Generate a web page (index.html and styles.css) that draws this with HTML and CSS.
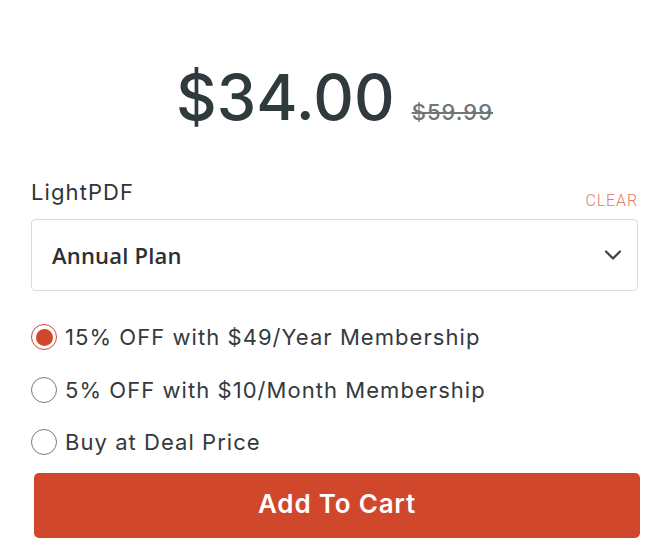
FILE: index.html
```html
<!DOCTYPE html>
<html>
<head>
<meta charset="utf-8">
<link rel="stylesheet" href="styles.css">
</head>
<body>
<div class="card">
  <div class="price-row">
    <span class="price">$34.00</span>
    <span class="old-price">$59.99</span>
  </div>
  <div class="label-row">
    <span class="label">LightPDF</span>
    <span class="clear">CLEAR</span>
  </div>
  <div class="select">
    <span class="select-text">Annual Plan</span>
    <svg class="chevron" width="18" height="12" viewBox="0 0 18 12"><path d="M2 2.5 L9 9.5 L16 2.5" fill="none" stroke="#3a4049" stroke-width="2.2" stroke-linecap="round" stroke-linejoin="round"/></svg>
  </div>
  <div class="options">
    <label class="option"><span class="radio checked"></span><span>15% OFF with $49/Year Membership</span></label>
    <label class="option"><span class="radio"></span><span>5% OFF with $10/Month Membership</span></label>
    <label class="option"><span class="radio"></span><span>Buy at Deal Price</span></label>
  </div>
  <button class="cart">Add To Cart</button>
</div>
</body>
</html>
```
FILE: styles.css
```css
* { box-sizing: border-box; }
html, body { margin: 0; padding: 0; background: #fff; }
body { font-family: Inter, "Open Sans", sans-serif; color: #333a3d; }
.card { width: 664px; padding: 0 26px 0 31px; }
.price-row {
  display: flex; justify-content: center; align-items: baseline;
  gap: 17px; padding-top: 66px; height: 160px; margin-left: 0;
}
.price { font-size: 63px; font-weight: 500; color: #2f3a3d; line-height: 1; letter-spacing: 0.1px; }
.old-price { font-size: 22px; font-weight: 500; color: #6e7677; text-decoration: line-through; line-height: 1; letter-spacing: 1px; }
.label-row { display: flex; justify-content: space-between; align-items: flex-end; height: 52px; padding-top: 18px; }
.label { font-size: 22px; color: #2f3538; line-height: 28px; align-self: flex-start; letter-spacing: 1.1px; }
.clear { font-size: 16px; font-weight: 300; color: #e07c60; font-family: Roboto, sans-serif; letter-spacing: 0.9px; margin-bottom: 2px; }
.select {
  margin-top: 7px; height: 72px; border: 1px solid #dcdcdc; border-radius: 4px;
  display: flex; align-items: center; justify-content: space-between; padding: 0 15px 0 20px;
}
.select-text { font-family: "Open Sans", sans-serif; font-size: 22px; font-weight: 600; color: #2c3034; letter-spacing: 0.2px; }
.options { padding-top: 20px; display: flex; flex-direction: column; gap: 0; }
.option { display: flex; align-items: center; gap: 8px; height: 52.5px; font-size: 22px; color: #333a3d; letter-spacing: 1.05px; }
.radio {
  width: 26px; height: 26px; border-radius: 50%; border: 1.5px solid #7a7a7a; flex: none;
  display: flex; align-items: center; justify-content: center;
}
.radio.checked { border-color: #d0472c; }
.radio.checked::after { content: ""; width: 17px; height: 17px; border-radius: 50%; background: #d0472c; }
.cart {
  display: block; margin: 4px 0 0 3px; width: 606px; height: 65px; border: none; border-radius: 5px;
  background: #d0472c; color: #fff; font-family: Inter, sans-serif; font-size: 26px; font-weight: 600;
  letter-spacing: 0.8px; padding-bottom: 4px;
}
```
